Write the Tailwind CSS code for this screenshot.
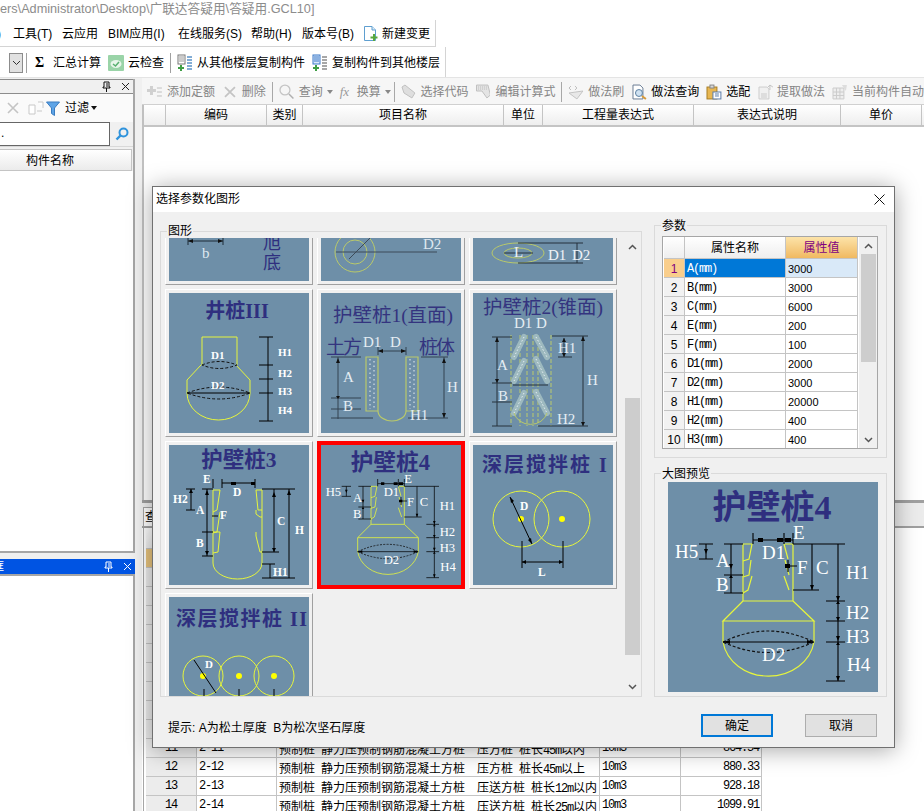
<!DOCTYPE html>
<html><head><meta charset="utf-8"><script src="https://cdn.jsdelivr.net/npm/@tailwindcss/browser@4"></script></head>
<body class="relative w-[924px] h-[811px] overflow-hidden bg-white text-[12px] text-black [font-family:'Liberation_Sans','Noto_Sans_CJK_SC',sans-serif]">
<svg width="0" height="0" class="absolute">
<defs>
<symbol id="pile4" viewBox="0 0 210 210">
<text x="104" y="37" text-anchor="middle" font-size="34" font-weight="700" fill="#2f2f7f" font-family="Liberation Serif, Noto Sans CJK SC">护壁桩4</text>
<g fill="none" stroke="#e6f53c" stroke-width="1.2">
<path d="M75 62V119H125V62M75 119L55 139H146L125 119M55 139V160A46 40 0 0 0 146 160V139"/>
<path d="M75 62H84L81 77L75 79M83 78L81 93L75 95M84 94L80 108L75 111M117 62H125M116 62L120 77M117 78L121 93M116 94L121 108"/>
</g>
<path d="M55 160Q100 138 146 160Q100 181 55 160" fill="none" stroke="#111" stroke-width="1.2" stroke-dasharray="3 2"/>
<g stroke="#000" stroke-width="1.1" fill="none">
<path d="M55 160H146M56 62H75M125 62H177M170 62V199M158 119H177M158 139H177M158 160H177M158 199H177M31 62H45M31 77H45M38 62V77M63 62V111M56 93H75M56 111H75M85 51V62M116 51V62M125 51V62M85 58H125M117 84H129M120 78V90M144 62V108M125 108H151"/>
</g>
<g fill="#000"><path d="M55 160l7-2v4zM146 160l-7-2v4zM90 56h5v4h-5zM109 56h6v4h-6zM117 56h6v4h-6zM117 82h5v4h-5zM61 82h4l-2 5zM61 96h4l-2-3zM168 114h4l-2 5zM168 122h4l-2-3zM168 135h4l-2 4zM168 154h4l-2 5zM168 163h4l-2-3zM168 194h4l-2 5zM36 67h4l-2 5zM142 103h4l-2 5z"/></g>
<g fill="#fff" font-size="19" font-family="Liberation Serif">
<text x="7" y="76">H5</text><text x="48" y="85">A</text><text x="48" y="109">B</text><text x="94" y="77">D1</text><text x="125" y="57">E</text><text x="129" y="92">F</text><text x="148" y="92">C</text><text x="178" y="97">H1</text><text x="178" y="137">H2</text><text x="178" y="161">H3</text><text x="179" y="189">H4</text><text x="94" y="179">D2</text>
</g>
</symbol>
</defs>
</svg>

<div class="h-[20px] whitespace-nowrap overflow-hidden text-[12.7px] leading-[18px] text-[#8c8c8c]">ers\Administrator\Desktop\广联达答疑用\答疑用.GCL10]</div>

<div class="h-[27px] w-[436px] pt-[1px] bg-white border-r border-b border-[#d4d4d4] flex items-center whitespace-nowrap">
<span class="w-[13px] -ml-[3px] mr-[3px]">)</span><span class="w-[49px]">工具(T)</span><span class="w-[46px]">云应用</span><span class="w-[70px]">BIM应用(I)</span><span class="w-[73px]">在线服务(S)</span><span class="w-[51px]">帮助(H)</span><span class="w-[61px]">版本号(B)</span>
<svg width="15" height="17" viewBox="0 0 15 17"><path d="M1.5 1.5H9L12.5 5V15.5H1.5Z" fill="#fff" stroke="#5f9fd0"/><path d="M9 1.5V5H12.5" fill="#dcecf8" stroke="#5f9fd0"/><path d="M10 9h2v2.500h2.500v2H12V16h-2v-2.500H7.500v-2H10z" fill="#58a83c"/></svg>
<span class="ml-[4px]">新建变更</span></div>

<div class="h-[30px] w-[446px] pt-[1px] bg-white border-r border-[#d4d4d4] flex items-center whitespace-nowrap">
<div class="w-[14px] h-[20px] ml-[9px] bg-[#e1e1e1] border border-[#8c8c8c] flex items-center justify-center"><svg width="9" height="6" viewBox="0 0 9 6"><path d="M1 1L4.500 4.500L8 1" fill="none" stroke="#333"/></svg></div>
<div class="w-[1px] h-[20px] bg-[#a0a0a0] ml-[3px]"></div>
<span class="ml-[8px] w-[10px] text-[14px] font-bold leading-none [font-family:'Liberation_Serif']">Σ</span><span class="ml-[8px]">汇总计算</span>
<svg class="ml-[7px]" width="16" height="16" viewBox="0 0 16 16"><rect width="16" height="16" rx="1" fill="#9ad4a8"/><ellipse cx="8" cy="9" rx="5.500" ry="4" fill="#e8f6ea"/><path d="M5 9L7.500 11L11 7" fill="none" stroke="#58b070" stroke-width="1.500"/></svg>
<span class="ml-[4px]">云检查</span><div class="w-[1px] h-[20px] bg-[#a0a0a0] ml-[6px]"></div>
<svg class="ml-[6px]" width="16" height="17" viewBox="0 0 16 17"><rect x="1" y="1" width="7" height="9" fill="#fff" stroke="#777"/><path d="M2 3h5M2 5h5M2 7h5" stroke="#999"/><path d="M10 3h5M10 6h5M10 9h5M10 12h5M10 15h5" stroke="#5b93c7" stroke-width="1.500"/><path d="M3 11h2v2h2v2H5v2H3v-2H1v-2h2z" fill="#3f9e45"/></svg>
<span class="ml-[4px]">从其他楼层复制构件</span>
<svg class="ml-[7px]" width="16" height="17" viewBox="0 0 16 17"><rect x="1" y="1" width="7" height="9" fill="#dbe9fa" stroke="#3a78c8"/><path d="M2 3h5M2 5h5M2 7h5" stroke="#3a78c8"/><path d="M10 3h5M10 6h5M10 9h5M10 12h5M10 15h5" stroke="#8a8a8a" stroke-width="1.500"/><path d="M3 11h2v2h2v2H5v2H3v-2H1v-2h2z" fill="#3f9e45"/></svg>
<span class="ml-[4px]">复制构件到其他楼层</span></div>

<div class="h-[734px] bg-[#f0f0f0] border-t border-[#e4e4e4] flex">
 <div class="w-[135px] shrink-0 flex flex-col">
  <div class="h-[474px] mt-[1px] bg-white border-r-2 border-b-2 border-[#a6a6a6] flex flex-col">
   <div class="h-[15px] bg-[#f0f0f0] border-t border-b border-[#8c8c8c] flex items-center justify-end pr-[3px] gap-[10px]">
    <svg width="9" height="11" viewBox="0 0 9 11"><path d="M2 1H7V6H8V7H1V6H2ZM4.500 7V11M5 2V6" fill="none" stroke="#111"/></svg>
    <svg width="9" height="9" viewBox="0 0 9 9"><path d="M1 1L8 8M8 1L1 8" stroke="#222"/></svg>
   </div>
   <div class="h-[28px] bg-[#fafafa] flex items-center whitespace-nowrap">
    <svg class="ml-[7px]" width="12" height="12" viewBox="0 0 12 12"><path d="M1 1L11 11M11 1L1 11" stroke="#c4c4c4" stroke-width="1.600"/></svg>
    <svg class="ml-[9px]" width="16" height="14" viewBox="0 0 16 14"><path d="M1 4H7V13H1ZM10 1H15V7" fill="#fff" stroke="#c8c8c8"/><path d="M9 10H14" stroke="#c8c8c8"/></svg>
    <svg class="ml-[2px]" width="14" height="15" viewBox="0 0 14 15"><path d="M0.500 1H13.500L8.500 7V14.500L5.500 12.500V7Z" fill="#5ea4e6" stroke="#3a7cc0"/></svg>
    <span class="ml-[5px]">过滤</span>
    <svg class="ml-[2px]" width="6" height="4" viewBox="0 0 6 4"><path d="M0 0H6L3 4Z" fill="#111"/></svg>
   </div>
   <div class="h-[25px] flex bg-[#f0f0f0] border-b border-[#d8d8d8]">
    <div class="w-[110px] bg-white border border-l-0 border-[#666] px-[1px] leading-[20px]">.</div>
    <div class="flex-1 flex items-center justify-center"><svg width="14" height="14" viewBox="0 0 14 14"><circle cx="8.500" cy="5.500" r="4" fill="none" stroke="#2f93dc" stroke-width="2"/><path d="M5.500 8.500L1.500 12.500" stroke="#2f93dc" stroke-width="2.400"/></svg></div>
   </div>
   <div class="h-[24px] pt-[2px] bg-[#f0f0f0]"><div class="h-[22px] w-[132px] mr-[2px] bg-gradient-to-b from-white to-[#ebebeb] border border-l-0 border-[#c4c4c4] pl-[26px] leading-[22px]">构件名称</div></div>
   <div class="flex-1 bg-white"></div>
  </div>
  <div class="h-[15px] mt-[6px] bg-[#0054e3] flex items-center pr-[3px] gap-[10px] relative w-[135px] overflow-hidden">
    <span class="-ml-[8px] mr-auto text-white">框</span>
    <svg width="9" height="11" viewBox="0 0 9 11"><path d="M2 1H7V6H8V7H1V6H2ZM4.500 7V11M5 2V6" fill="none" stroke="#fff"/></svg>
    <svg width="9" height="9" viewBox="0 0 9 9"><path d="M1 1L8 8M8 1L1 8" stroke="#fff"/></svg>
  </div>
  <div class="flex-1 bg-white border-t-2 border-r-2 border-[#a6a6a6]"></div>
 </div>

 <div class="ml-[7px] flex-1 min-w-0 flex flex-col bg-white">
  <div class="h-[27px] shrink-0 pt-[1px] bg-[#f6f6f6] border-b border-[#d0d0d0] flex items-center whitespace-nowrap overflow-hidden text-[#858585]">
   <svg class="ml-[5px]" width="15" height="14" viewBox="0 0 15 14"><path d="M3 1h3v3h3v3H6v3H3V7H0V4h3z" fill="#d0d0d0"/><path d="M10 3h5M10 7h5M10 11h5" stroke="#c0c0c0"/></svg><span class="ml-[5px]">添加定额</span>
   <svg class="ml-[9px]" width="12" height="12" viewBox="0 0 12 12"><path d="M1 1L11 11M11 1L1 11" stroke="#c4c4c4" stroke-width="1.800"/></svg><span class="ml-[6px]">删除</span>
   <div class="w-[1px] h-[20px] bg-[#a8a8a8] ml-[6px]"></div>
   <svg class="ml-[6px]" width="15" height="15" viewBox="0 0 15 15"><circle cx="6" cy="6" r="5" fill="none" stroke="#c4c4c4" stroke-width="1.300"/><path d="M10 10L14.500 14.500" stroke="#b0b0b0" stroke-width="1.500"/></svg><span class="ml-[5px]">查询</span>
   <svg class="ml-[4px]" width="6" height="4" viewBox="0 0 6 4"><path d="M0 0H6L3 4Z" fill="#888"/></svg>
   <span class="ml-[7px] w-[12px] text-[13px] italic [font-family:'Liberation_Serif'] text-[#999]">fx</span><span class="ml-[5px]">换算</span>
   <svg class="ml-[4px]" width="6" height="4" viewBox="0 0 6 4"><path d="M0 0H6L3 4Z" fill="#888"/></svg>
   <div class="w-[1px] h-[20px] bg-[#a8a8a8] ml-[3px]"></div>
   <svg class="ml-[6px]" width="15" height="15" viewBox="0 0 15 15"><path d="M1 3L4 1L14 9L11 14L3 9Z" fill="#dedede" stroke="#c0c0c0"/></svg><span class="ml-[5px]">选择代码</span>
   <svg class="ml-[7px]" width="15" height="15" viewBox="0 0 15 15"><path d="M0.500 1H12L14.500 11L11 14L6 7H0.500Z" fill="#e4e4e4" stroke="#c0c0c0"/><path d="M2 3H11M2 5H11" stroke="#bbb" stroke-dasharray="1 1"/></svg><span class="ml-[5px]">编辑计算式</span>
   <div class="w-[1px] h-[20px] bg-[#a8a8a8] ml-[6px]"></div>
   <svg class="ml-[6px]" width="16" height="16" viewBox="0 0 16 16"><path d="M3 2L1 4L3 6M7 2L9 4L7 6" fill="none" stroke="#bbb"/><path d="M1 9L15 7L9 15Z" fill="#e8e8e8" stroke="#c4c4c4"/></svg><span class="ml-[4px]">做法刷</span>
   <svg class="ml-[8px]" width="15" height="16" viewBox="0 0 15 16"><path d="M1 1H8L11 4V15H1Z" fill="#fff" stroke="#6a7c94"/><circle cx="7" cy="9" r="3.500" fill="#cfe2f2" stroke="#5b7fa0"/><path d="M10 12L14 15" stroke="#d89b3a" stroke-width="2"/></svg><span class="ml-[4px] text-black">做法查询</span>
   <svg class="ml-[7px]" width="16" height="16" viewBox="0 0 16 16"><rect x="1" y="3" width="10" height="12" fill="#e8b752" stroke="#a87d24"/><rect x="4" y="1" width="4" height="3" fill="#d8d8d8" stroke="#888"/><rect x="7" y="8" width="8" height="7" fill="#fff" stroke="#5a7ca8"/><path d="M9 10H13M9 12H13" stroke="#5a7ca8"/></svg><span class="ml-[4px] text-black">选配</span>
   <svg class="ml-[8px]" width="16" height="16" viewBox="0 0 16 16"><path d="M1 3H9L11 5V15H1Z" fill="#f0f0f0" stroke="#cdcdcd"/><rect x="3" y="9" width="6" height="6" fill="#ddd"/><path d="M12 1V6M10 3L12 1L15 3" fill="none" stroke="#c4c4c4"/></svg><span class="ml-[3px]">提取做法</span>
   <svg class="ml-[7px]" width="16" height="16" viewBox="0 0 16 16"><path d="M1 4H12V15H1ZM1 8H12M1 11.500H12M4.500 4V15M8 4V15" fill="#eee" stroke="#ccc"/><path d="M10 1L15 1L14 7Z" fill="#ddd"/></svg><span class="ml-[4px]">当前构件自动</span>
  </div>
  <div class="h-[395px] shrink-0 border-l-2 border-[#c0c0c0] bg-white">
   <div class="h-[22px] w-[780px] flex bg-gradient-to-b from-white to-[#eeeeee] border-b-2 border-[#c4c4c4] text-center leading-[21px] [&>div]:border-r [&>div]:border-[#c4c4c4] [&>div]:shrink-0">
    <div class="w-[22px]"></div><div class="w-[101px]">编码</div><div class="w-[36px]">类别</div><div class="w-[201px]">项目名称</div><div class="w-[39px]">单位</div><div class="w-[151px]">工程量表达式</div><div class="w-[147px]">表达式说明</div><div class="w-[81px]">单价</div>
   </div>
  </div>
  <div class="h-[3px] shrink-0 bg-[#a0a0a0]"></div>
  <div class="h-[25px] shrink-0 pl-[1px] pt-[4px] bg-gradient-to-r from-[#f0f0f0] to-[#ececec] border-b-2 border-[#a0a0a0]"><div class="w-[40px] h-[20px] bg-white border border-[#a6a6a6] pl-[1px] leading-[18px]">查询</div></div>
  <div class="flex-1 min-h-0 overflow-hidden ml-[1px] border-l border-[#a6a6a6] pl-[2px] bg-white [font-family:'Liberation_Mono','Noto_Sans_CJK_SC',monospace]">
   <div class="h-[21px] w-[616px] flex bg-gradient-to-b from-white to-[#eeeeee] border-b border-[#c4c4c4]"><span class="w-[51px] border-r border-[#c4c4c4]"></span></div>
   <div class="w-[616px] [&>div]:grid [&>div]:grid-cols-[51px_80px_323px_81px_81px] [&>div]:h-[19px] [&>div]:border-b [&>div]:border-[#c4c4c4] [&>div>span]:border-r [&>div>span]:border-[#c4c4c4] [&>div>span]:px-[2px] [&>div>span]:leading-[19px] [&>div>span]:whitespace-pre [&>div>span]:overflow-hidden [&>div>span:first-child]:text-center [&>div>span:first-child]:bg-[#ececec]">
    <div><span class="bg-[#e8c47e]!"></span><span></span><span></span><span></span><span></span></div>
    <div><span></span><span></span><span></span><span></span><span></span></div>
    <div><span></span><span></span><span></span><span></span><span></span></div>
    <div><span></span><span></span><span></span><span></span><span></span></div>
    <div><span></span><span></span><span></span><span></span><span></span></div>
    <div><span></span><span></span><span></span><span></span><span></span></div>
    <div><span></span><span></span><span></span><span></span><span></span></div>
    <div><span></span><span></span><span></span><span></span><span></span></div>
    <div><span></span><span></span><span></span><span></span><span></span></div>
    <div><span></span><span></span><span></span><span></span><span></span></div>
    <div><span class="tracking-[-1.2px]">11</span><span class="tracking-[-1.2px]">2-11</span><span class="[font-family:'Noto_Sans_CJK_SC']">预制桩&ensp;静力压预制钢筋混凝土方桩&ensp;&ensp;压方桩&ensp;桩长<i class="not-italic [font-family:'Liberation_Mono'] tracking-[-1.2px]">45m</i>以内</span><span class="tracking-[-1.2px]">10m3</span><span class="text-right tracking-[-1.2px]">864.54</span></div>
    <div><span class="tracking-[-1.2px]">12</span><span class="tracking-[-1.2px]">2-12</span><span class="[font-family:'Noto_Sans_CJK_SC']">预制桩&ensp;静力压预制钢筋混凝土方桩&ensp;&ensp;压方桩&ensp;桩长<i class="not-italic [font-family:'Liberation_Mono'] tracking-[-1.2px]">45m</i>以上</span><span class="tracking-[-1.2px]">10m3</span><span class="text-right tracking-[-1.2px]">880.33</span></div>
    <div><span class="tracking-[-1.2px]">13</span><span class="tracking-[-1.2px]">2-13</span><span class="[font-family:'Noto_Sans_CJK_SC']">预制桩&ensp;静力压预制钢筋混凝土方桩&ensp;&ensp;压送方桩&ensp;桩长<i class="not-italic [font-family:'Liberation_Mono'] tracking-[-1.2px]">12m</i>以内</span><span class="tracking-[-1.2px]">10m3</span><span class="text-right tracking-[-1.2px]">928.18</span></div>
    <div><span class="tracking-[-1.2px]">14</span><span class="tracking-[-1.2px]">2-14</span><span class="[font-family:'Noto_Sans_CJK_SC']">预制桩&ensp;静力压预制钢筋混凝土方桩&ensp;&ensp;压送方桩&ensp;桩长<i class="not-italic [font-family:'Liberation_Mono'] tracking-[-1.2px]">25m</i>以内</span><span class="tracking-[-1.2px]">10m3</span><span class="text-right tracking-[-1.2px]">1099.91</span></div>
   </div>
  </div>
 </div>
</div>

<!-- dialog -->
<div class="absolute left-[152px] top-[186px] w-[743px] h-[562px] bg-[#f0f0f0] border border-[#707070] shadow-[0_2px_22px_rgba(0,0,0,0.35)]">
 <div class="h-[25px] bg-white flex items-center justify-between pl-[3px] pr-[9px]"><span class="-mt-[1px]">选择参数化图形</span><svg width="11" height="11" viewBox="0 0 11 11"><path d="M0.500 0.500L10.500 10.500M10.500 0.500L0.500 10.500" stroke="#111"/></svg></div>
 <div class="h-[485px] flex items-start pl-[7px]">
  <div class="relative mt-[19px] w-[482px] h-[466px] border border-[#dadada]">
   <span class="absolute left-[6px] -top-[9px] px-[1px] bg-[#f0f0f0] leading-[16px] h-[14px]">图形</span>
   <div class="mt-[6px] flex h-[458px]">
    <div class="w-[463px] h-[458px] overflow-hidden pl-[4px]">
     <div class="-mt-[101px] grid grid-cols-[148px_148px_148px] gap-[4px] [&>div]:h-[148px] [&>div]:p-[3px] [&>div]:border [&>div]:border-white [&>div]:border-r-[#a0a0a0] [&>div]:border-b-[#a0a0a0] [&_svg]:block [&_svg]:bg-[#6e8fa8]">
      <div><svg width="140" height="140" viewBox="0 0 140 140"><g stroke="#1c2a36" fill="none"><path d="M19 96V104M54 96V104M19 100H54"/></g><path d="M19 100l5-2v4zM54 100l-5-2v4z" fill="#111"/><text x="33" y="117" fill="#dde8f0" font-size="15" font-family="Liberation Serif">b</text><g fill="#2f2f7f" font-size="18" font-family="Noto Sans CJK SC"><text x="94" y="108">旭</text><text x="94" y="128">底</text></g></svg></div>
      <div><svg width="140" height="140" viewBox="0 0 140 140"><circle cx="34" cy="111" r="20" fill="none" stroke="#b9c96a"/><circle cx="34" cy="111" r="12" fill="none" stroke="#b9c96a"/><path d="M15 111H116M28 118L49 97" stroke="#3d4b58"/><text x="102" y="108" fill="#dde8f0" font-size="15" font-family="Liberation Serif">D2</text></svg></div>
      <div><svg width="140" height="140" viewBox="0 0 140 140"><ellipse cx="45" cy="112" rx="26" ry="10" fill="none" stroke="#b9c96a"/><ellipse cx="45" cy="112" rx="14" ry="5" fill="none" stroke="#b9c96a"/><path d="M45 102H110M45 122H110M104 102V122M31 112H60" stroke="#25313c"/><text x="41" y="116" fill="#eef3f7" font-size="15" font-family="Liberation Serif">L</text><text x="75" y="119" fill="#eef3f7" font-size="15" font-family="Liberation Serif">D1</text><text x="99" y="119" fill="#eef3f7" font-size="15" font-family="Liberation Serif">D2</text></svg></div>

      <div><svg width="140" height="140" viewBox="0 0 140 140"><text x="68" y="25" text-anchor="middle" font-size="20" font-weight="700" fill="#2f2f7f" font-family="Liberation Serif, Noto Sans CJK SC">井桩III</text><path d="M33 72V44H68V72M32 72L18 87V100A31.500 27 0 0 0 81 100V87L67 72" fill="none" stroke="#e6f53c"/><path d="M33 72Q50 65 68 72Q50 79 33 72ZM18 100Q50 88 81 100Q50 112 18 100Z" fill="none" stroke="#111" stroke-dasharray="3 2"/><path d="M18 100H81M99 44V128M90 44H104M90 72H104M90 86H104M90 100H104M90 128H104" stroke="#000" fill="none"/><g fill="#fff" font-size="11" font-weight="700" font-family="Liberation Serif"><text x="42" y="66">D1</text><text x="42" y="96">D2</text><text x="109" y="63">H1</text><text x="109" y="84">H2</text><text x="109" y="102">H3</text><text x="109" y="121">H4</text></g></svg></div>
      <div><svg width="140" height="140" viewBox="0 0 140 140"><text x="72" y="29" text-anchor="middle" font-size="19.500" fill="#34347f" font-family="Liberation Serif, Noto Sans CJK SC">护壁桩1(直面)</text><g font-size="19" fill="#34347f" font-family="Noto Sans CJK SC"><text x="5" y="61" letter-spacing="-2">土方</text><text x="98" y="61" letter-spacing="-2">桩体</text></g><path d="M45 64H57V118H45ZM85 64H97V118H85ZM57 118A14 10 0 0 0 85 118" fill="none" stroke="#b9c96a" stroke-width="1.200"/><path d="M49 66V116M53 68V116M89 66V116M93 68V116" stroke="#e6eef2" stroke-dasharray="1.500 3"/><path d="M10 64H40M100 64H127M17 64V126M123 64V125M10 105H40M10 116H40M10 125H52M87 125H127M57 58H85M57 54V62M85 54V62" stroke="#334350" fill="none"/><path d="M15 70h4l-2-5zM15 103h4l-2 3zM121 70h4l-2-5zM121 120h4l-2 5zM57 58l5-2v4zM85 58l-5-2v4z" fill="#111"/><g fill="#e4edf3" font-size="15" font-family="Liberation Serif"><text x="42" y="54">D1</text><text x="69" y="54">D</text><text x="22" y="89">A</text><text x="22" y="118">B</text><text x="126" y="99">H</text><text x="89" y="127">H1</text></g></svg></div>
      <div><svg width="140" height="140" viewBox="0 0 140 140"><text x="70" y="21" text-anchor="middle" font-size="19.500" fill="#34347f" font-family="Liberation Serif, Noto Sans CJK SC">护壁桩2(锥面)</text><path d="M38 42V133M47 42V133M54 42V133M60 42V133M65 42V133M78 42V133" stroke="#bccb6c" stroke-dasharray="4 2"/><g stroke="#9db9bf" stroke-width="6" stroke-linecap="round"><path d="M51 44L41 64M63 44L74 64M51 68L41 88M63 66L74 88M51 100L41 120M63 99L74 120"/></g><g stroke="#e6eef2" stroke-dasharray="1.500 2"><path d="M51 44L41 64M63 44L74 64M51 68L41 88M63 66L74 88M51 100L41 120M63 99L74 120"/></g><path d="M41 120A17 15 0 0 0 74 120" fill="none" stroke="#b9c96a"/><path d="M24 44V133M19 44H39M19 90H39M19 109H39M19 133H39M110 43V133M79 43H115M65 133H115M91 45V64M85 64H99M40 92H75" stroke="#26323d" fill="none"/><path d="M22 49h4l-2-5zM22 86h4l-2 4zM108 48h4l-2-5zM108 129h4l-2 4zM89 49h4l-2-4zM89 60h4l-2 4z" fill="#111"/><g fill="#e4edf3" font-size="15" font-family="Liberation Serif"><text x="41" y="35">D1 D</text><text x="24" y="77">A</text><text x="25" y="108">B</text><text x="114" y="92">H</text><text x="85" y="60">H1</text><text x="84" y="131">H2</text></g></svg></div>

      <div><svg width="140" height="140" viewBox="0 0 140 140"><text x="70" y="22" text-anchor="middle" font-size="21.500" font-weight="700" fill="#2f2f7f" font-family="Liberation Serif, Noto Sans CJK SC">护壁桩3</text><path d="M44 45V118A24.500 16 0 0 0 93 118V45H87M44 45H51L48 65L44 67M51 67L48 87L44 88M44 87H51L49 107L44 108M87 45L89 65H93M87 65V69L91 72H93M87 87V91L91 107H93" fill="none" stroke="#e6f53c"/><path d="M33 44H44M93 44H126M53 38H86M53 34V43M86 34V43M44 34V43M17 44H26M17 65H26M22 44V65M38 44V111M33 87H44M33 111H44M43 71H49M105 44V107M93 107H110M120 44V133M93 133H126M101 119V133M93 119H106" stroke="#000" fill="none"/><path d="M62 37h5v3h-5zM82 37h4v3h-4zM103 52h4l-2-5zM103 103h4l-2 4zM118 50h4l-2-5zM36 50h4l-2-5zM36 106h4l-2 4zM20 48h4l-2-4z" fill="#000"/><g fill="#fff" font-size="11.500" font-weight="700" font-family="Liberation Serif"><text x="34" y="38">E</text><text x="64" y="51">D</text><text x="4" y="58">H2</text><text x="27" y="69">A</text><text x="51" y="74">F</text><text x="27" y="102">B</text><text x="108" y="80">C</text><text x="126" y="89">H</text><text x="104" y="131">H1</text></g></svg></div>
      <div class="bg-[#ff0000]! border-0! p-[4px]!"><svg width="140" height="140" viewBox="0 0 140 140"><use href="#pile4" width="140" height="140"/></svg></div>
      <div><svg width="140" height="140" viewBox="0 0 140 140"><text x="9" y="27" font-size="20" letter-spacing="2" font-weight="700" fill="#2f2f7f" font-family="Liberation Serif, Noto Sans CJK SC">深层搅拌桩 I</text><g fill="none" stroke="#e6f53c"><circle cx="48" cy="74" r="28"/><circle cx="89" cy="74" r="28"/></g><circle cx="48" cy="74" r="3" fill="#ffff00"/><circle cx="89" cy="74" r="3" fill="#ffff00"/><path d="M37 52L59 99M49 96V123M90 96V123M49 117H90" stroke="#000" fill="none"/><path d="M37 52l1 6 3-2zM59 99l-1-6-3 2zM49 117l4-2v4zM90 117l-4-2v4z" fill="#000"/><g fill="#fff" font-size="11.500" font-weight="700" font-family="Liberation Serif"><text x="47" y="65">D</text><text x="65" y="131">L</text></g></svg></div>

      <div><svg width="140" height="140" viewBox="0 0 140 140"><text x="7" y="29" font-size="20" letter-spacing="1.500" font-weight="700" fill="#2f2f7f" font-family="Liberation Serif, Noto Sans CJK SC">深层搅拌桩 II</text><g fill="none" stroke="#e6f53c"><circle cx="34" cy="79" r="20"/><circle cx="70" cy="79" r="20"/><circle cx="105" cy="79" r="20"/></g><circle cx="34" cy="79" r="3" fill="#ffff00"/><circle cx="70" cy="79" r="3" fill="#ffff00"/><circle cx="105" cy="79" r="3" fill="#ffff00"/><path d="M25 63L47 96M35 92V110M70 92V110M105 92V110" stroke="#000" fill="none"/><text x="36" y="71" fill="#fff" font-size="11" font-weight="700" font-family="Liberation Serif">D</text></svg></div>
     </div>
    </div>
    <div class="w-[15px] ml-[1px] h-[458px] flex flex-col items-center">
     <div class="h-[17px] flex items-center"><svg width="9" height="6" viewBox="0 0 9 6"><path d="M1 5L4.500 1.500L8 5" fill="none" stroke="#555" stroke-width="1.500"/></svg></div>
     <div class="w-[15px] h-[257px] mt-[143px] bg-[#cdcdcd]"></div>
     <div class="h-[17px] mt-auto mb-[1px] flex items-center"><svg width="9" height="6" viewBox="0 0 9 6"><path d="M1 1L4.500 4.500L8 1" fill="none" stroke="#555" stroke-width="1.500"/></svg></div>
    </div>
   </div>
  </div>
  <div class="ml-[12px] mt-[13px] w-[233px] flex flex-col gap-[15px]">
   <div class="relative h-[233px] border border-[#dadada] pt-[10px] pl-[7px]">
    <span class="absolute left-[6px] -top-[8px] px-[1px] bg-[#f0f0f0] leading-[16px] h-[14px]">参数</span>
    <div class="w-[216px] h-[213px] border border-[#a6a6a6] flex bg-white pl-[1px]">
     <div class="w-[195px] grid grid-cols-[21px_101px_72px] grid-rows-[22px_repeat(10,19px)] overflow-hidden leading-[20px] [&>span]:border-r [&>span]:border-b [&>span]:border-[#c4c4c4] [&>span]:px-[2px] [&>span]:whitespace-nowrap">
      <span class="bg-gradient-to-b from-white to-[#eeeeee]"></span><span class="bg-gradient-to-b from-white to-[#eeeeee] text-center leading-[23px]">属性名称</span><span class="bg-gradient-to-b from-[#fce3a8] to-[#f0b960] text-center leading-[23px] text-[#800080]">属性值</span>
      <span class="bg-[#f9ce8c] text-center text-[#800080] px-0!">1</span><span class="bg-[#0078d7] text-white [font-family:'Liberation_Mono'] tracking-[-1.2px]">A(mm)</span><span class="bg-[#d9e9f8] text-[11px]">3000</span>
      <span class="bg-[#f2f2f2] text-center px-0!">2</span><span class="[font-family:'Liberation_Mono'] tracking-[-1.2px]">B(mm)</span><span class="text-[11px]">3000</span>
      <span class="bg-[#f2f2f2] text-center px-0!">3</span><span class="[font-family:'Liberation_Mono'] tracking-[-1.2px]">C(mm)</span><span class="text-[11px]">6000</span>
      <span class="bg-[#f2f2f2] text-center px-0!">4</span><span class="[font-family:'Liberation_Mono'] tracking-[-1.2px]">E(mm)</span><span class="text-[11px]">200</span>
      <span class="bg-[#f2f2f2] text-center px-0!">5</span><span class="[font-family:'Liberation_Mono'] tracking-[-1.2px]">F(mm)</span><span class="text-[11px]">100</span>
      <span class="bg-[#f2f2f2] text-center px-0!">6</span><span class="[font-family:'Liberation_Mono'] tracking-[-1.2px]">D1(mm)</span><span class="text-[11px]">2000</span>
      <span class="bg-[#f2f2f2] text-center px-0!">7</span><span class="[font-family:'Liberation_Mono'] tracking-[-1.2px]">D2(mm)</span><span class="text-[11px]">3000</span>
      <span class="bg-[#f2f2f2] text-center px-0!">8</span><span class="[font-family:'Liberation_Mono'] tracking-[-1.2px]">H1(mm)</span><span class="text-[11px]">20000</span>
      <span class="bg-[#f2f2f2] text-center px-0!">9</span><span class="[font-family:'Liberation_Mono'] tracking-[-1.2px]">H2(mm)</span><span class="text-[11px]">400</span>
      <span class="bg-[#f2f2f2] text-center px-0!">10</span><span class="[font-family:'Liberation_Mono'] tracking-[-1.2px]">H3(mm)</span><span class="text-[11px]">400</span>
     </div>
     <div class="flex-1 bg-[#f0f0f0] flex flex-col items-center">
      <div class="h-[17px] flex items-center"><svg width="9" height="6" viewBox="0 0 9 6"><path d="M1 5L4.500 1.500L8 5" fill="none" stroke="#555" stroke-width="1.500"/></svg></div>
      <div class="w-[15px] h-[108px] bg-[#cdcdcd]"></div>
      <div class="h-[17px] mt-auto flex items-center"><svg width="9" height="6" viewBox="0 0 9 6"><path d="M1 1L4.500 4.500L8 1" fill="none" stroke="#555" stroke-width="1.500"/></svg></div>
     </div>
    </div>
   </div>
   <div class="relative h-[224px] border border-[#dadada] pt-[8px] pl-[13px]">
    <span class="absolute left-[6px] -top-[8px] px-[1px] bg-[#f0f0f0] leading-[16px] h-[14px]">大图预览</span>
    <svg class="block bg-[#6e8fa8]" width="210" height="210" viewBox="0 0 210 210"><use href="#pile4" width="210" height="210"/></svg>
   </div>
  </div>
 </div>
 <div class="flex items-start pl-[15px] mt-[17px] pr-[17px]">
  <span class="mt-[5px] whitespace-pre">提示: A为松土厚度  B为松次坚石厚度</span>
  <button class="ml-auto w-[72px] h-[23px] bg-[#e1e1e1] border-2 border-[#0078d7]">确定</button>
  <button class="ml-[32px] w-[72px] h-[23px] bg-[#e1e1e1] border border-[#adadad]">取消</button>
 </div>
</div>
</body></html>
